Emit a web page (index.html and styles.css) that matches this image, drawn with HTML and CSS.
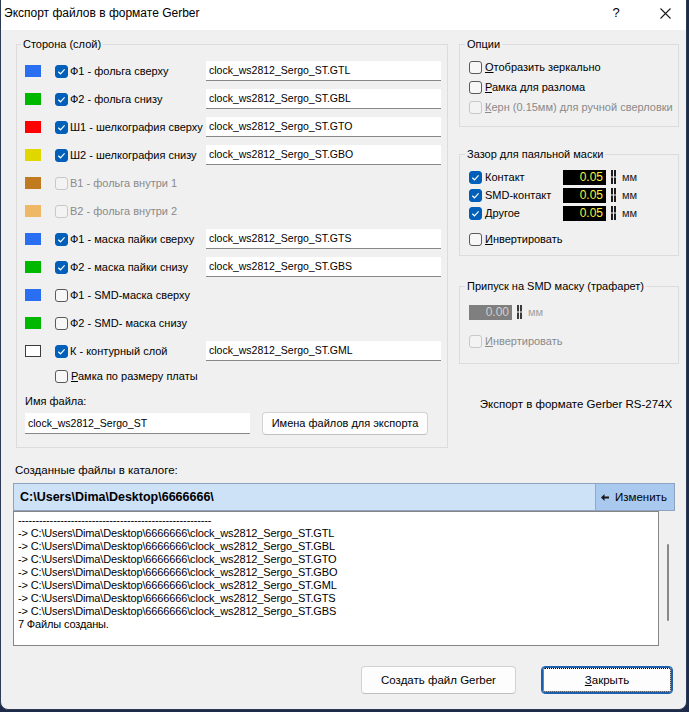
FILE: index.html
```html
<!DOCTYPE html>
<html lang="ru">
<head>
<meta charset="utf-8">
<title>Экспорт файлов в формате Gerber</title>
<link rel="stylesheet" href="styles.css">
</head>
<body>
<div class="window">
  <div class="titlebar">
    <span class="title">Экспорт файлов в формате Gerber</span>
    <span class="tb-help">?</span>
    <span class="tb-close"><svg width="11" height="11" viewBox="0 0 11 11"><path d="M0.5 0.5 L10.5 10.5 M10.5 0.5 L0.5 10.5" stroke="#1a1a1a" stroke-width="1.1" fill="none"/></svg></span>
  </div>
  <div class="content">
    <div class="top">
      <fieldset class="grp layers">
        <legend>Сторона (слой)</legend>
        <div class="layer"><span class="swatch sw-blue"></span><span class="cbl"><span class="cb on"><svg viewBox="0 0 13 13"><path d="M3.3 6.7 L5.5 8.8 L9.6 4.4" /></svg></span>Ф1 - фольга сверху</span><span class="field">clock_ws2812_Sergo_ST.GTL</span></div>
        <div class="layer"><span class="swatch sw-green"></span><span class="cbl"><span class="cb on"><svg viewBox="0 0 13 13"><path d="M3.3 6.7 L5.5 8.8 L9.6 4.4" /></svg></span>Ф2 - фольга снизу</span><span class="field">clock_ws2812_Sergo_ST.GBL</span></div>
        <div class="layer"><span class="swatch sw-red"></span><span class="cbl"><span class="cb on"><svg viewBox="0 0 13 13"><path d="M3.3 6.7 L5.5 8.8 L9.6 4.4" /></svg></span>Ш1 - шелкография сверху</span><span class="field">clock_ws2812_Sergo_ST.GTO</span></div>
        <div class="layer"><span class="swatch sw-yellow"></span><span class="cbl"><span class="cb on"><svg viewBox="0 0 13 13"><path d="M3.3 6.7 L5.5 8.8 L9.6 4.4" /></svg></span>Ш2 - шелкография снизу</span><span class="field">clock_ws2812_Sergo_ST.GBO</span></div>
        <div class="layer"><span class="swatch sw-brown"></span><span class="cbl dis"><span class="cb dis"></span>В1 - фольга внутри 1</span></div>
        <div class="layer"><span class="swatch sw-orange"></span><span class="cbl dis"><span class="cb dis"></span>В2 - фольга внутри 2</span></div>
        <div class="layer"><span class="swatch sw-blue"></span><span class="cbl"><span class="cb on"><svg viewBox="0 0 13 13"><path d="M3.3 6.7 L5.5 8.8 L9.6 4.4" /></svg></span>Ф1 - маска пайки сверху</span><span class="field">clock_ws2812_Sergo_ST.GTS</span></div>
        <div class="layer"><span class="swatch sw-green"></span><span class="cbl"><span class="cb on"><svg viewBox="0 0 13 13"><path d="M3.3 6.7 L5.5 8.8 L9.6 4.4" /></svg></span>Ф2 - маска пайки снизу</span><span class="field">clock_ws2812_Sergo_ST.GBS</span></div>
        <div class="layer"><span class="swatch sw-blue"></span><span class="cbl"><span class="cb"></span>Ф1 - SMD-маска сверху</span></div>
        <div class="layer"><span class="swatch sw-green"></span><span class="cbl"><span class="cb"></span>Ф2 - SMD- маска снизу</span></div>
        <div class="layer"><span class="swatch sw-white"></span><span class="cbl"><span class="cb on"><svg viewBox="0 0 13 13"><path d="M3.3 6.7 L5.5 8.8 L9.6 4.4" /></svg></span>К - контурный слой</span><span class="field">clock_ws2812_Sergo_ST.GML</span></div>
        <div class="frame-row"><span class="cbl"><span class="cb"></span><span><u>Р</u>амка по размеру платы</span></span></div>
        <div class="fname-label">Имя файла:</div>
        <div class="fname-row">
          <span class="field fname">clock_ws2812_Sergo_ST</span>
          <span class="btn names-btn">Имена файлов для экспорта</span>
        </div>
      </fieldset>

      <div class="right-col">
        <fieldset class="grp options">
          <legend>Опции</legend>
          <div class="orow"><span class="cb"></span><span><u>О</u>тобразить зеркально</span></div>
          <div class="orow"><span class="cb"></span><span><u>Р</u>амка для разлома</span></div>
          <div class="orow dis"><span class="cb dis"></span><span><u>К</u>ерн (0.15мм) для ручной сверловки</span></div>
        </fieldset>

        <fieldset class="grp mask">
          <legend>Зазор для паяльной маски</legend>
          <div class="mrow"><span class="mcbl"><span class="cb on"><svg viewBox="0 0 13 13"><path d="M3.3 6.7 L5.5 8.8 L9.6 4.4" /></svg></span>Контакт</span><span class="spin">0.05</span><svg class="arrows" width="5" height="14" viewBox="0 0 5 14"><rect x="0" y="0" width="2" height="6.5" fill="#1c1c1c"/><rect x="3" y="0" width="2" height="6.5" fill="#1c1c1c"/><rect x="0" y="7.5" width="2" height="6.5" fill="#1c1c1c"/><rect x="3" y="7.5" width="2" height="6.5" fill="#1c1c1c"/></svg><span class="unit">мм</span></div>
          <div class="mrow"><span class="mcbl"><span class="cb on"><svg viewBox="0 0 13 13"><path d="M3.3 6.7 L5.5 8.8 L9.6 4.4" /></svg></span>SMD-контакт</span><span class="spin">0.05</span><svg class="arrows" width="5" height="14" viewBox="0 0 5 14"><rect x="0" y="0" width="2" height="6.5" fill="#1c1c1c"/><rect x="3" y="0" width="2" height="6.5" fill="#1c1c1c"/><rect x="0" y="7.5" width="2" height="6.5" fill="#1c1c1c"/><rect x="3" y="7.5" width="2" height="6.5" fill="#1c1c1c"/></svg><span class="unit">мм</span></div>
          <div class="mrow"><span class="mcbl"><span class="cb on"><svg viewBox="0 0 13 13"><path d="M3.3 6.7 L5.5 8.8 L9.6 4.4" /></svg></span>Другое</span><span class="spin">0.05</span><svg class="arrows" width="5" height="14" viewBox="0 0 5 14"><rect x="0" y="0" width="2" height="6.5" fill="#1c1c1c"/><rect x="3" y="0" width="2" height="6.5" fill="#1c1c1c"/><rect x="0" y="7.5" width="2" height="6.5" fill="#1c1c1c"/><rect x="3" y="7.5" width="2" height="6.5" fill="#1c1c1c"/></svg><span class="unit">мм</span></div>
          <div class="mrow inv"><span class="mcbl"><span class="cb"></span><span><u>И</u>нвертировать</span></span></div>
        </fieldset>

        <fieldset class="grp paste">
          <legend>Припуск на SMD маску (трафарет)</legend>
          <div class="mrow"><span class="spin off">0.00</span><svg class="arrows" width="5" height="14" viewBox="0 0 5 14"><rect x="0" y="0" width="2" height="6.5" fill="#3a3a3a"/><rect x="3" y="0" width="2" height="6.5" fill="#3a3a3a"/><rect x="0" y="7.5" width="2" height="6.5" fill="#3a3a3a"/><rect x="3" y="7.5" width="2" height="6.5" fill="#3a3a3a"/></svg><span class="unit off">мм</span></div>
          <div class="mrow inv2 dis"><span class="mcbl"><span class="cb dis"></span><span><u>И</u>нвертировать</span></span></div>
        </fieldset>

        <div class="rs">Экспорт в формате Gerber RS-274X</div>
      </div>
    </div>

    <div class="created-label">Созданные файлы в каталоге:</div>
    <div class="pathbar">
      <div class="path">C:\Users\Dima\Desktop\6666666\</div>
      <div class="change"><svg width="8" height="7" viewBox="0 0 8 7"><path d="M0 3.5 L3.5 0 V2.5 H8 V4.5 H3.5 V7 Z" fill="#1a1a1a"/></svg><span>Изменить</span></div>
    </div>
    <div class="log-wrap">
      <div class="log">-------------------------------------------------------
-&gt; C:\Users\Dima\Desktop\6666666\clock_ws2812_Sergo_ST.GTL
-&gt; C:\Users\Dima\Desktop\6666666\clock_ws2812_Sergo_ST.GBL
-&gt; C:\Users\Dima\Desktop\6666666\clock_ws2812_Sergo_ST.GTO
-&gt; C:\Users\Dima\Desktop\6666666\clock_ws2812_Sergo_ST.GBO
-&gt; C:\Users\Dima\Desktop\6666666\clock_ws2812_Sergo_ST.GML
-&gt; C:\Users\Dima\Desktop\6666666\clock_ws2812_Sergo_ST.GTS
-&gt; C:\Users\Dima\Desktop\6666666\clock_ws2812_Sergo_ST.GBS
7 Файлы созданы.</div>
      <div class="scroll"><div class="thumb"></div></div>
    </div>
    <div class="buttons">
      <span class="btn create-btn">Создать файл Gerber</span>
      <span class="btn close-btn"><span><u>З</u>акрыть</span></span>
    </div>
  </div>
</div>
</body>
</html>
```

FILE: styles.css
```css
html, body {
  margin: 0;
  padding: 0;
}
body {
  width: 689px;
  height: 712px;
  overflow: hidden;
  background: #1d2b48;
  font-family: "Liberation Sans", Arial, sans-serif;
  font-size: 11px;
  color: #000;
}
.window {
  width: 687px;
  height: 710px;
  box-sizing: border-box;
  background: #f0f0f0;
  border: 1px solid #2c3a58;
  border-top: none;
  border-radius: 0 0 8px 8px;
  overflow: hidden;
  display: flex;
  flex-direction: column;
}
.titlebar {
  height: 30px;
  flex: none;
  background: #fff;
  display: flex;
  align-items: flex-start;
  padding: 6px 0 0 3px;
  box-sizing: border-box;
  font-size: 12px;
  line-height: 14px;
}
.title {
  flex: 1;
}
.tb-help {
  width: 12px;
  text-align: center;
  margin-right: 38px;
  font-size: 13px;
}
.tb-close {
  margin-right: 15px;
  padding-top: 2px;
}
.tb-close svg {
  display: block;
}
.content {
  padding: 7px 7px 0 15px;
  display: flex;
  flex-direction: column;
}
.top {
  display: flex;
  align-items: flex-start;
  gap: 11px;
}
fieldset.grp {
  margin: 0;
  min-width: 0;
  border: 1px solid #dcdcdc;
  box-sizing: border-box;
}
fieldset.grp legend {
  padding: 0 2px;
  margin-left: -4px;
  line-height: 14px;
  font-size: 11px;
}
fieldset.layers {
  width: 433px;
  padding: 6px 6px 12px 8px;
}
.layer {
  display: flex;
  align-items: center;
  height: 28px;
}
.swatch {
  width: 16px;
  height: 12px;
  box-sizing: border-box;
  margin-right: 14px;
  flex: none;
}
.sw-blue { background: #2a6ff2; }
.sw-green { background: #00b800; }
.sw-red { background: #ff0000; }
.sw-yellow { background: #e1d700; }
.sw-brown { background: #c07a20; }
.sw-orange { background: #efb867; }
.sw-white { background: #fff; border: 1px solid #3c3c3c; }
.cbl {
  width: 151px;
  flex: none;
  display: flex;
  align-items: center;
  gap: 2px;
  white-space: nowrap;
}
.cbl.dis, .orow.dis, .mrow.dis {
  color: #8a8a8a;
}
.cb {
  width: 13px;
  height: 13px;
  box-sizing: border-box;
  border: 1px solid #5a5a5a;
  border-radius: 3px;
  background: #f7f7f7;
  flex: none;
  display: inline-block;
}
.cb svg {
  display: block;
  width: 13px;
  height: 13px;
  margin: -1px;
}
.cb svg path {
  stroke: #fff;
  stroke-width: 1.2;
  fill: none;
}
.cb.on {
  background: #005fb8;
  border-color: #005fb8;
}
.cb.dis {
  border-color: #c8c8c8;
  background: #f3f3f3;
}
.field {
  width: 235px;
  height: 20px;
  box-sizing: border-box;
  background: #fff;
  border-bottom: 1px solid #878787;
  padding-left: 3px;
  line-height: 19px;
  font-size: 10.5px;
  white-space: nowrap;
  flex: none;
}
.frame-row {
  height: 22px;
  display: flex;
  align-items: center;
  padding-left: 30px;
}
.frame-row .cbl {
  gap: 3px;
}
.fname-label {
  margin-top: 7px;
  line-height: 14px;
}
.fname-row {
  margin-top: 3px;
  height: 24px;
  display: flex;
  align-items: center;
}
.field.fname {
  width: 225px;
  height: 21px;
  line-height: 20px;
}
.btn {
  display: flex;
  align-items: center;
  justify-content: center;
  box-sizing: border-box;
  background: #fdfdfd;
  border: 1px solid #d2d2d2;
  border-bottom-color: #c0c0c0;
  border-radius: 4px;
  font-size: 11px;
  white-space: nowrap;
}
.names-btn {
  margin-left: 12px;
  width: 166px;
  height: 23px;
}
.right-col {
  width: 220px;
  display: flex;
  flex-direction: column;
}
fieldset.options {
  padding: 6px 6px 9px 9px;
}
.orow {
  height: 20px;
  display: flex;
  align-items: center;
  gap: 3px;
  white-space: nowrap;
}
fieldset.mask {
  margin-top: 20px;
  padding: 7px 6px 7px 9px;
}
.mrow {
  height: 18px;
  display: flex;
  align-items: center;
  white-space: nowrap;
}
.mcbl {
  width: 94px;
  display: flex;
  align-items: center;
  gap: 3px;
  flex: none;
}
.mrow.inv {
  margin-top: 8px;
}
.spin {
  width: 43px;
  height: 15px;
  box-sizing: border-box;
  background: #000;
  color: #f4f43c;
  text-align: right;
  padding-right: 3px;
  font-size: 12px;
  line-height: 15px;
  flex: none;
}
.spin.off {
  background: #7f7f7f;
  color: #cfcfcf;
}
.arrows {
  margin-left: 5px;
  flex: none;
}
.unit {
  margin-left: 6px;
  color: #222;
}
.unit.off {
  color: #a2a2a2;
}
fieldset.paste {
  margin-top: 23px;
  padding: 10px 6px 13px 9px;
}
.mrow.inv2 {
  margin-top: 11px;
}
.rs {
  margin-top: 33px;
  line-height: 14px;
  font-size: 11.5px;
  text-align: center;
  padding-left: 14px;
}
.created-label {
  margin-top: 15px;
  margin-left: -1px;
  line-height: 14px;
  font-size: 11.5px;
}
.pathbar {
  margin-top: 6px;
  margin-left: -3px;
  width: 662px;
  height: 28px;
  box-sizing: border-box;
  border: 1px solid #8fa3c0;
  background: #cde1f7;
  display: flex;
}
.path {
  flex: 1;
  padding-left: 6px;
  font-weight: bold;
  font-size: 12.5px;
  line-height: 26px;
}
.change {
  width: 79px;
  background: #a9c9ef;
  border-left: 1px solid #8fa8cc;
  display: flex;
  align-items: center;
  gap: 6px;
  padding-left: 5px;
  box-sizing: border-box;
  font-size: 11.5px;
}
.log-wrap {
  margin-left: -3px;
  height: 135px;
  display: flex;
}
.log {
  width: 646px;
  box-sizing: border-box;
  background: #fff;
  border: 1px solid #858585;
  padding: 2px 4px;
  font-size: 11px;
  line-height: 13px;
  letter-spacing: -0.15px;
  white-space: pre;
  overflow: hidden;
}
.scroll {
  width: 17px;
}
.thumb {
  width: 2px;
  height: 77px;
  margin: 33px 0 0 8px;
  background: #888;
  border-radius: 1px;
}
.buttons {
  margin-top: 20px;
  margin-right: 6px;
  display: flex;
  justify-content: flex-end;
  gap: 25px;
}
.create-btn {
  width: 155px;
  height: 28px;
  font-size: 11.5px;
}
.close-btn {
  width: 132px;
  height: 28px;
  font-size: 11.5px;
  border: 1px solid #1b5fae;
  box-shadow: inset 0 0 0 1px #1b5fae;
  outline: 1px dotted #000;
  outline-offset: -3px;
}
```
